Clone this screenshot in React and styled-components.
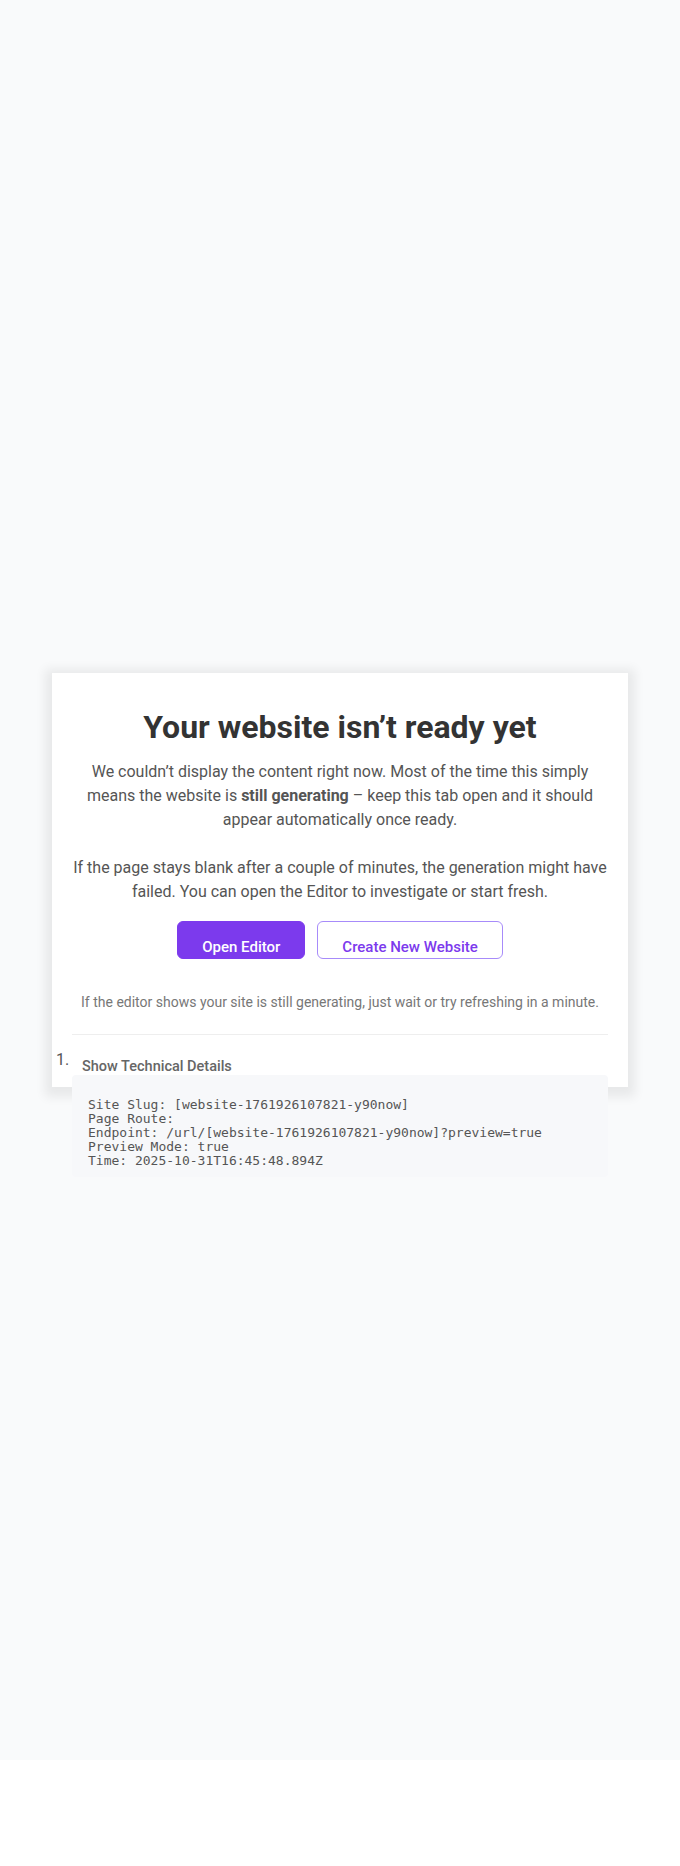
import React from 'react';
import styled, { createGlobalStyle } from 'styled-components';

const GlobalStyle = createGlobalStyle`
    html, body {
        margin: 0;
        padding: 0;
        background: #ffffff;
    }
    * {
        box-sizing: border-box;
    }
`;

const S = {
    Page: styled.div`
        display: flex;
        align-items: center;
        justify-content: center;
        min-height: 1760px;
        padding: 0 52px;
        background-color: #f9fafb;
        font-family: Roboto, 'Liberation Sans', sans-serif;
    `,
    Card: styled.div`
        width: 100%;
        max-width: 576px;
        height: 414px;
        padding: 35px 20px 0;
        background-color: #ffffff;
        box-shadow: 0 3px 10px 7px rgba(0, 0, 0, 0.07);
        text-align: center;
    `,
    Title: styled.h1`
        margin: 0 0 14px;
        font-size: 32px;
        line-height: 38px;
        font-weight: 700;
        color: #333333;
    `,
    Lead: styled.p`
        margin: 0;
        font-size: 16px;
        line-height: 24px;
        color: #555555;
        & strong {
            font-weight: 700;
        }
    `,
    Actions: styled.div`
        display: flex;
        justify-content: center;
        gap: 12px;
        margin-top: 17px;
    `,
    Button: styled.a`
        display: inline-block;
        height: 38px;
        padding: 14px 24px 0;
        border-radius: 6px;
        border: 1px solid ${(p) => (p.$outline ? '#a78bfa' : '#7c3aed')};
        background-color: ${(p) => (p.$outline ? '#ffffff' : '#7c3aed')};
        color: ${(p) => (p.$outline ? '#7c3aed' : '#ffffff')};
        font-size: 15px;
        font-weight: 500;
        line-height: 22px;
        text-decoration: none;
        cursor: pointer;
    `,
    Note: styled.p`
        margin: 33px 0 0;
        font-size: 14px;
        line-height: 20px;
        color: #777777;
    `,
    Divider: styled.hr`
        margin: 22px 0 0;
        border: 0;
        border-top: 1px solid #eeeeee;
    `,
    Details: styled.div`
        margin-top: 15px;
        text-align: left;
    `,
    SummaryRow: styled.div`
        display: flex;
        align-items: flex-start;
        margin-left: -16px;
    `,
    Marker: styled.span`
        width: 16px;
        font-size: 16px;
        line-height: 20px;
        color: #555555;
    `,
    Summary: styled.div`
        padding: 8px 10px 0;
        font-size: 14.5px;
        font-weight: 500;
        line-height: 18px;
        color: #666666;
        cursor: pointer;
    `,
    Pre: styled.pre`
        margin: -1px 0 0;
        padding: 23px 16px 9px;
        border-radius: 4px;
        background-color: #f7f8fa;
        font-family: 'DejaVu Sans Mono', monospace;
        font-size: 13px;
        line-height: 14px;
        color: #555555;
        white-space: pre-wrap;
    `,
};

const details = [
    'Site Slug: [website-1761926107821-y90now]',
    'Page Route: ',
    'Endpoint: /url/[website-1761926107821-y90now]?preview=true',
    'Preview Mode: true',
    'Time: 2025-10-31T16:45:48.894Z',
].join('\n');

export default function App() {
    return (
        <>
            <GlobalStyle />
            <S.Page>
                <S.Card>
                    <S.Title>Your website isn’t ready yet</S.Title>
                    <S.Lead>
                        We couldn’t display the content right now. Most of the time this simply
                        means the website is <strong>still generating</strong> – keep this tab open
                        and it should appear automatically once ready.
                        <br />
                        <br />
                        If the page stays blank after a couple of minutes, the generation might
                        have failed. You can open the Editor to investigate or start fresh.
                    </S.Lead>
                    <S.Actions>
                        <S.Button>Open Editor</S.Button>
                        <S.Button $outline>Create New Website</S.Button>
                    </S.Actions>
                    <S.Note>
                        If the editor shows your site is still generating, just wait or try refreshing in a minute.
                    </S.Note>
                    <S.Divider />
                    <S.Details>
                        <S.SummaryRow>
                            <S.Marker>1.</S.Marker>
                            <S.Summary>Show Technical Details</S.Summary>
                        </S.SummaryRow>
                        <S.Pre>{details}</S.Pre>
                    </S.Details>
                </S.Card>
            </S.Page>
        </>
    );
}
